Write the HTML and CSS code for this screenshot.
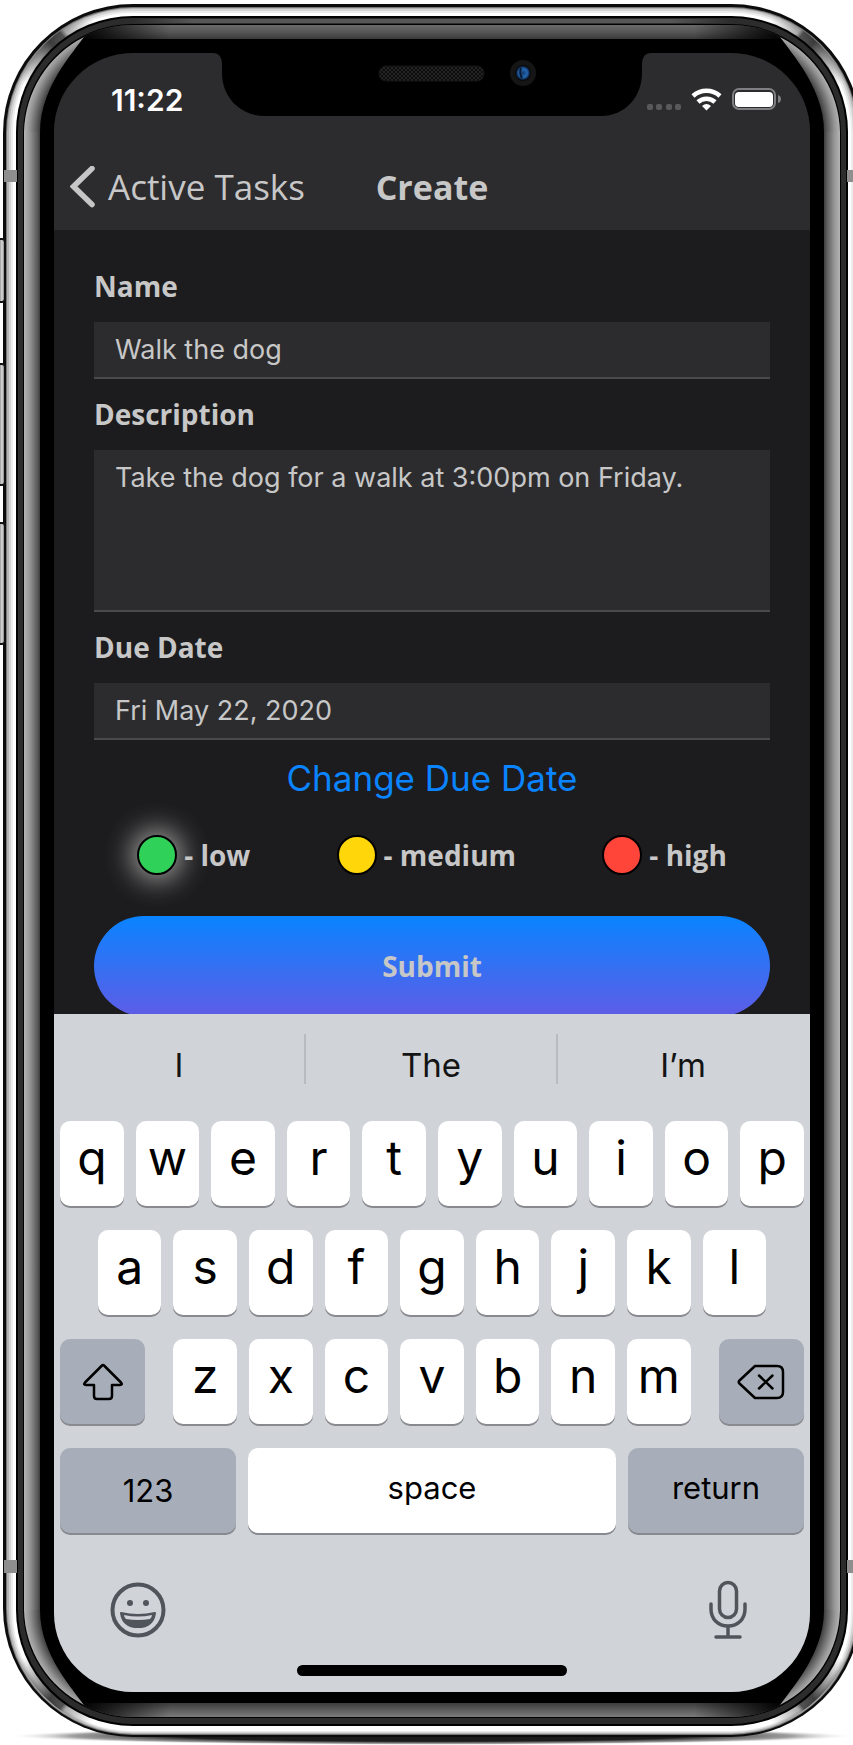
FILE: index.html
```html
<!DOCTYPE html>
<html lang="en">
<head>
<meta charset="utf-8">
<meta name="viewport" content="width=device-width, initial-scale=1">
<title>Create task</title>
<link rel="stylesheet" href="styles.css">
</head>
<body>
<main class="stage">
  <svg class="device" viewBox="0 0 853 1745" preserveAspectRatio="none" aria-hidden="true">
    <defs>
      <linearGradient id="sideL" gradientUnits="userSpaceOnUse" x1="24" y1="0" x2="41" y2="0"><stop offset="0" stop-color="#b4b4b4"/><stop offset=".35" stop-color="#949494"/><stop offset=".8" stop-color="#585858"/><stop offset="1" stop-color="#303030"/></linearGradient>
      <radialGradient id="cornerT" gradientUnits="userSpaceOnUse" cx="133" cy="132" r="109"><stop offset=".84" stop-color="#303030"/><stop offset=".88" stop-color="#585858"/><stop offset=".95" stop-color="#949494"/><stop offset="1" stop-color="#b4b4b4"/></radialGradient>
      <radialGradient id="cornerB" gradientUnits="userSpaceOnUse" cx="133" cy="1610" r="109"><stop offset=".84" stop-color="#303030"/><stop offset=".88" stop-color="#585858"/><stop offset=".95" stop-color="#949494"/><stop offset="1" stop-color="#b4b4b4"/></radialGradient>
      <linearGradient id="topBevel" x1="0" y1="0" x2="0" y2="1"><stop offset="0" stop-color="#6a6a6a"/><stop offset=".5" stop-color="#565656"/><stop offset="1" stop-color="#3a3a3a"/></linearGradient>
      <linearGradient id="botBevel" x1="0" y1="0" x2="0" y2="1"><stop offset="0" stop-color="#3c3c3c"/><stop offset="1" stop-color="#7c7c7c"/></linearGradient>
      <linearGradient id="fadeL" gradientUnits="userSpaceOnUse" x1="84" y1="0" x2="170" y2="0"><stop offset="0" stop-color="#000" stop-opacity=".95"/><stop offset="1" stop-color="#000" stop-opacity="0"/></linearGradient>
      <linearGradient id="strip" gradientUnits="userSpaceOnUse" x1="133" y1="0" x2="731" y2="0"><stop offset="0" stop-color="#2c2c2c"/><stop offset=".1" stop-color="#565656"/><stop offset=".9" stop-color="#565656"/><stop offset="1" stop-color="#2c2c2c"/></linearGradient>
      <linearGradient id="glint" gradientUnits="userSpaceOnUse" x1="20" y1="80" x2="90" y2="16"><stop offset="0" stop-color="#555" stop-opacity="0"/><stop offset=".3" stop-color="#555" stop-opacity=".6"/><stop offset=".5" stop-color="#2a2a2a" stop-opacity=".9"/><stop offset=".65" stop-color="#333" stop-opacity=".85"/><stop offset=".7" stop-color="#777" stop-opacity=".6"/><stop offset="1" stop-color="#777" stop-opacity="0"/></linearGradient>
      <linearGradient id="button" gradientUnits="userSpaceOnUse" x1="0" y1="0" x2="4" y2="0"><stop offset="0" stop-color="#999"/><stop offset=".5" stop-color="#ddd"/><stop offset="1" stop-color="#888"/></linearGradient>
      <radialGradient id="ground"><stop offset=".6" stop-color="#1c1c1c"/><stop offset=".85" stop-color="#777" stop-opacity=".7"/><stop offset="1" stop-color="#fff" stop-opacity="0"/></radialGradient>
      <clipPath id="rim"><rect x="24" y="25" width="816" height="1692" rx="109" ry="108"/></clipPath>
    </defs>
    <ellipse cx="432" cy="1736" rx="424" ry="9" fill="url(#ground)"/>
    <rect x="3" y="4" width="858" height="1733" rx="130" ry="129" fill="#0c0c0c"/>
    <g fill="url(#button)" stroke="#111" stroke-width="2">
      <rect x="-4" y="239" width="9" height="63" rx="3"/>
      <rect x="-4" y="364" width="9" height="121" rx="3"/>
      <rect x="-4" y="523" width="9" height="121" rx="3"/>
    </g>
    <rect x="6" y="7" width="852" height="1728" rx="127" ry="126" fill="#777"/>
    <rect x="7" y="8" width="850" height="1726" rx="126" ry="125" fill="#b4b4b4"/>
    <rect x="9" y="9" width="846" height="1724" rx="124" ry="123" fill="#d4d4d4"/>
    <rect x="11" y="11" width="842" height="1721" rx="122" ry="121" fill="#ececec"/>
    <rect x="13" y="13" width="838" height="1718" rx="120" ry="119" fill="#fff"/>
    <g fill="none" stroke-width="9" stroke="url(#glint)">
      <path d="M12 132A121 121 0 0 1 133 12"/>
      <path d="M12 132A121 121 0 0 1 133 12" transform="translate(864 0) scale(-1 1)"/>
      <path d="M12 132A121 121 0 0 1 133 12" transform="translate(0 1741) scale(1 -1)"/>
      <path d="M12 132A121 121 0 0 1 133 12" transform="translate(864 1741) scale(-1 -1)"/>
    </g>
    <rect x="16" y="16" width="832" height="1710" rx="117" ry="116" fill="#000"/>
    <rect x="18" y="18" width="828" height="1706" rx="115" ry="114" fill="#2c2c2c"/>
    <path d="M133 19H731V23H133Z" fill="url(#strip)"/>
    <rect x="23" y="24" width="818" height="1694" rx="110" ry="109" fill="#000"/>
    <g clip-path="url(#rim)">
      <path d="M84 25H780V39H84Z" fill="url(#topBevel)"/>
      <path d="M84 1703H780V1717H84Z" fill="url(#botBevel)"/>
      <path d="M60 24H172V54H60ZM60 1690H172V1718H60Z" fill="url(#fadeL)"/>
      <path d="M60 24H172V54H60ZM60 1690H172V1718H60Z" fill="url(#fadeL)" transform="translate(864 0) scale(-1 1)"/>
    </g>
    <g>
      <path d="M24 132H41V1610H24Z" fill="url(#sideL)"/>
      <path d="M24 132A109 109 0 0 1 84 37C64 64 41 90 41 132Z" fill="url(#cornerT)"/>
      <path d="M24 1610A109 109 0 0 0 84 1705C64 1678 41 1652 41 1610Z" fill="url(#cornerB)"/>
    </g>
    <g transform="translate(864 0) scale(-1 1)">
      <path d="M24 132H41V1610H24Z" fill="url(#sideL)"/>
      <path d="M24 132A109 109 0 0 1 84 37C64 64 41 90 41 132Z" fill="url(#cornerT)"/>
      <path d="M24 1610A109 109 0 0 0 84 1705C64 1678 41 1652 41 1610Z" fill="url(#cornerB)"/>
    </g>
    <path d="M40 132A93 93 0 0 1 133 39H731A93 93 0 0 1 824 132V1610A93 93 0 0 1 731 1703H133A93 93 0 0 1 40 1610Z" fill="#000"/>
    <path d="M4 170H17V182H4ZM847 170H860V182H847ZM4 1560H17V1573H4ZM847 1560H860V1573H847Z" fill="#8e8e8e"/>
  </svg>

  <div class="screen">
    <svg class="notch" viewBox="0 0 438 63" aria-hidden="true">
      <defs>
        <pattern id="mesh" width="4" height="4" patternUnits="userSpaceOnUse"><rect width="4" height="4" fill="#0d0d0d"/><circle cx="1" cy="1" r="1" fill="#2b2b2b"/><circle cx="3" cy="3" r="1" fill="#2b2b2b"/></pattern>
        <radialGradient id="lens"><stop offset="0" stop-color="#123a6c"/><stop offset=".6" stop-color="#2468b4"/><stop offset="1" stop-color="#0a1830"/></radialGradient>
      </defs>
      <path d="M0 0Q9 0 9 12V20C9 44 27 63 52 63H388C412 63 429 44 429 20V12Q429 0 438 0Z" fill="#000"/>
      <rect x="166" y="13" width="105" height="15" rx="7" fill="url(#mesh)" stroke="#141414"/>
      <circle cx="310" cy="20" r="13" fill="#151515"/>
      <circle cx="310" cy="20" r="8" fill="#090b10"/>
      <circle cx="310" cy="20" r="7" fill="url(#lens)"/>
      <path d="M308 15Q306 20 309 25" fill="none" stroke="#0a1830" stroke-width="2"/>
    </svg>

    <header class="header">
      <div class="status">
        <time class="clock">11:22</time>
        <svg class="indicators" width="136" height="24" viewBox="0 0 136 24" role="img" aria-label="Wi-Fi connected, battery full">
          <g fill="#59595b"><rect x="1" y="16" width="6" height="6" rx="2"/><rect x="10" y="16" width="6" height="6" rx="2"/><rect x="20" y="16" width="6" height="6" rx="2"/><rect x="29" y="16" width="6" height="6" rx="2"/></g>
          <g fill="none" stroke="#fff" stroke-width="4.500"><path d="M47 8A20 20 0 0 1 74 8"/><path d="M52 14A12.500 12.500 0 0 1 69 14"/></g>
          <path d="M60.500 22.500L56 18Q60.500 14 65 18Z" fill="#fff"/>
          <rect x="87" y="1" width="42" height="20" rx="6" fill="none" stroke="#7f7f81" stroke-width="2"/>
          <rect x="89" y="4" width="38" height="15" rx="4" fill="#fff"/>
          <path d="M132 7Q135 8 135 11T132 15Z" fill="#7f7f81"/>
        </svg>
      </div>
      <nav class="nav">
        <a class="back" href="#tasks">
          <svg width="26" height="42" viewBox="0 0 26 42" aria-hidden="true"><path d="M22 2.500L3.500 20.500L22 38.500" fill="none" stroke="#c6c6c6" stroke-width="5.500" stroke-linecap="round"/></svg>
          <span>Active Tasks</span>
        </a>
        <h1 class="title">Create</h1>
      </nav>
    </header>

    <form class="form">
      <label class="label" for="name">Name</label>
      <input class="field" id="name" type="text" value="Walk the dog">
      <label class="label" for="description">Description</label>
      <textarea class="field field-area" id="description">Take the dog for a walk at 3:00pm on Friday.</textarea>
      <label class="label" for="due">Due Date</label>
      <input class="field" id="due" type="text" value="Fri May 22, 2020" readonly>
      <button class="change" type="button">Change Due Date</button>
      <div class="priorities" role="radiogroup" aria-label="Priority">
        <label class="priority"><input class="dot dot-low" type="radio" name="priority" checked>- low</label>
        <label class="priority"><input class="dot dot-medium" type="radio" name="priority">- medium</label>
        <label class="priority"><input class="dot dot-high" type="radio" name="priority">- high</label>
      </div>
      <button class="submit" type="button">Submit</button>
    </form>

    <section class="keyboard" aria-label="Keyboard">
      <div class="suggestions">
        <button class="suggestion" type="button">I</button>
        <button class="suggestion" type="button">The</button>
        <button class="suggestion" type="button">I’m</button>
      </div>
      <div class="keys">
        <div class="row"><button class="key">q</button><button class="key">w</button><button class="key">e</button><button class="key">r</button><button class="key">t</button><button class="key">y</button><button class="key">u</button><button class="key">i</button><button class="key">o</button><button class="key">p</button></div>
        <div class="row"><button class="key">a</button><button class="key">s</button><button class="key">d</button><button class="key">f</button><button class="key">g</button><button class="key">h</button><button class="key">j</button><button class="key">k</button><button class="key">l</button></div>
        <div class="row">
          <button class="key key-mod key-first" aria-label="Shift"><svg width="42" height="38" viewBox="0 0 42 38" aria-hidden="true"><path d="M20 2.500Q21 1.500 22 2.500L39 19.500Q41 22 38 22H30V33Q30 36 27 36H15Q12 36 12 33V22H4Q1 22 3 19.500Z" fill="none" stroke="#000" stroke-width="2.500" stroke-linejoin="round"/></svg></button>
          <button class="key">z</button><button class="key">x</button><button class="key">c</button><button class="key">v</button><button class="key">b</button><button class="key">n</button><button class="key">m</button>
          <button class="key key-mod key-last" aria-label="Delete"><svg width="48" height="36" viewBox="0 0 48 36" aria-hidden="true"><g fill="none" stroke="#000" stroke-width="2.500" stroke-linecap="round" stroke-linejoin="round"><path d="M18 2H40Q46 2 46 8V28Q46 34 40 34H18L2.500 19.500Q1 18 2.500 16.500Z"/><path d="M22 11.500L35.500 24.500M35.500 11.500L22 24.500"/></g></svg></button>
        </div>
        <div class="row"><button class="key key-word key-side key-num">123</button><button class="key key-word key-space">space</button><button class="key key-word key-side">return</button></div>
      </div>
      <div class="tools">
        <button class="tool" aria-label="Emoji"><svg width="56" height="56" viewBox="0 0 56 56" aria-hidden="true"><circle cx="28" cy="28" r="25.500" fill="none" stroke="#50555c" stroke-width="4"/><circle cx="20" cy="21" r="3" fill="#50555c"/><circle cx="36" cy="21" r="3" fill="#50555c"/><path d="M11 31Q28 35 45 31Q43 45 28 45T11 31Z" fill="#50555c" stroke="#50555c" stroke-width="2" stroke-linejoin="round"/><path d="M14 33Q28 36 42 33Q42 35 40 37Q28 39 16 37Q14 35 14 33Z" fill="#d0d3d8"/></svg></button>
        <button class="tool" aria-label="Dictate"><svg width="40" height="60" viewBox="0 0 40 60" aria-hidden="true"><g fill="none" stroke="#50555c" stroke-width="3.500" stroke-linecap="round"><rect x="11.500" y="2.500" width="17" height="35" rx="8.500"/><path d="M3 24V29C3 39 10 46 20 46S37 39 37 29V24M20 46V56M8 57H32"/></g></svg></button>
      </div>
      <div class="home-bar"></div>
    </section>
  </div>
</main>
</body>
</html>
```
FILE: styles.css
```css
* { box-sizing: border-box; }

body {
  margin: 0;
  background: #fff;
  font-family: "Open Sans", "Noto Sans", sans-serif;
  color: #c7c7c7;
}

button, input, textarea { margin: 0; padding: 0; border: 0; background: none; color: inherit; }
button { display: flex; align-items: center; justify-content: center; }

.stage { position: relative; overflow: hidden; padding: 53px 43px 53px 54px; }
.device { position: absolute; inset: 0; width: 100%; height: 100%; }

.screen {
  position: relative;
  display: flex;
  flex-direction: column;
  overflow: hidden;
  border-radius: 79px;
  background: #1c1c1e;
}
.notch { position: absolute; top: 0; left: 50%; width: 438px; margin-left: -219px; }

.header { padding-bottom: 3px; background: #2c2c2e; }
.status { display: flex; align-items: center; justify-content: space-between; height: 93px; padding: 0 28px 0 57px; }
.clock { color: #fff; font: 600 30px/36px Inter, sans-serif; }
.nav { display: grid; grid-template-columns: 1fr auto 1fr; align-items: center; height: 81px; padding: 0 16px; }
.back { display: flex; align-items: center; gap: 12px; color: inherit; font-size: 35px; line-height: 44px; text-decoration: none; white-space: nowrap; }
.title { margin: 0; font-size: 34px; line-height: 44px; font-weight: 700; }

.form { display: flex; flex-direction: column; padding: 36px 40px 0; }
.label { margin-bottom: 16px; font-size: 28px; line-height: 40px; font-weight: 700; }
.field {
  width: 100%;
  height: 57px;
  margin-bottom: 15px;
  padding: 0 21px;
  border-bottom: 2px solid #4a4a4c;
  border-radius: 0;
  background: #2c2c2e;
  font: 400 27px/36px Inter, sans-serif;
  outline: 0;
}
.field-area { display: block; height: 162px; padding: 10px 21px; resize: none; }
.change { align-self: center; color: #0a84ff; font: 400 35px/46px Inter, sans-serif; }
.priorities { display: flex; justify-content: space-around; padding: 34px 0 41px; }
.priority { display: flex; align-items: center; gap: 7px; font-size: 28px; line-height: 40px; font-weight: 700; }
.dot { appearance: none; width: 40px; height: 40px; border: 2px solid #000; border-radius: 50%; }
.dot:checked { box-shadow: 0 0 28px 5px #a8a8a8; }
.dot-low { background: #30d158; }
.dot-medium { background: #ffd60a; }
.dot-high { background: #ff453a; }
.submit {
  height: 100px;
  border-radius: 50px;
  background: linear-gradient(#0a84ff, #5e5ce6);
  font: 700 28px/40px "Open Sans", "Noto Sans", sans-serif;
}

.keyboard { position: relative; margin-top: -2px; padding-bottom: 16px; background: #d0d3d8; color: #000; }
.suggestions { display: grid; grid-template-columns: repeat(3, 1fr); padding: 20px 0 37px; }
.suggestion { height: 50px; padding-top: 12px; border-right: 2px solid #b8bbc0; color: #141414; font: 400 33px/38px Inter, sans-serif; }
.suggestion:last-child { border-right-color: transparent; }

.keys { display: grid; gap: 24px; padding: 0 6px; }
.row { display: flex; justify-content: center; gap: 12px; }
.key {
  flex: 0 0 calc((100% - 108px) / 10);
  height: 85px;
  padding-bottom: 12px;
  border-radius: 10px;
  background: #fff;
  box-shadow: 0 2px 0 #888a8f;
  font: 400 48px/60px Inter, sans-serif;
}
.key-mod, .key-side { background: #a8aeb9; }
.key-mod { flex: 1; padding-bottom: 0; }
.key-first { margin-right: 16px; }
.key-last { margin-left: 16px; }
.key-word { padding-bottom: 6px; font-size: 31px; line-height: 40px; }
.key-side { flex: 0 0 176px; }
.key-num { padding-bottom: 0; }
.key-space { flex: 1; }

.tools { display: flex; align-items: center; justify-content: space-between; padding: 47px 62px 0 56px; }
.home-bar { width: 270px; height: 11px; margin: 25px auto 0; border-radius: 6px; background: #000; }
```
